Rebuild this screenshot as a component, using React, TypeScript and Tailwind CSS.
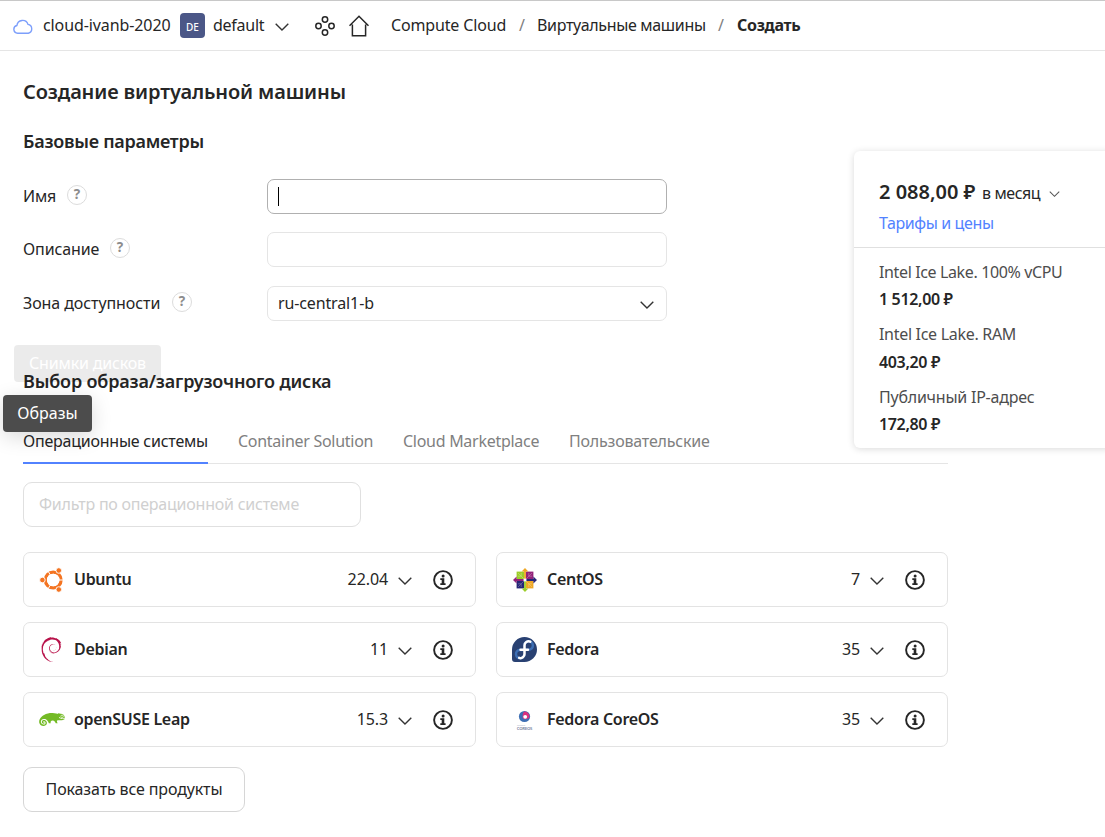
import React from "react";
import { SiDebian } from "react-icons/si";
import { FaSuse } from "react-icons/fa";

function Chevron({ className = "w-[14px] h-2 text-[#333]" }: { className?: string }) {
  return (
    <svg viewBox="0 0 14 8" fill="none" stroke="currentColor" strokeWidth="1.4" className={className}>
      <path d="M0.7 0.8 7 7 13.3 0.8" />
    </svg>
  );
}

function InfoIcon() {
  return (
    <svg viewBox="0 0 20 20" className="h-5 w-5 shrink-0">
      <circle cx="10" cy="10" r="8.9" fill="none" stroke="#262626" strokeWidth="1.9" />
      <circle cx="10.1" cy="5.9" r="1.5" fill="#262626" />
      <path d="M7.3 8.2h4v5.100h1.300v1.700H7.300v-1.700h1.400V9.900H7.300z" fill="#262626" />
    </svg>
  );
}

function UbuntuLogo() {
  return (
    <svg viewBox="0 0 26 26" className="h-[26px] w-[26px]">
      <circle cx="14.2" cy="13" r="7.9" fill="none" stroke="#f47421" strokeWidth="3.2" />
      <g stroke="#fff" strokeWidth="1">
        <path d="M14.2 13 24 13" opacity="0" />
        <path d="M14.2 13 9.300 4.500" />
        <path d="M14.2 13 9.300 21.500" />
        <path d="M14.2 13H24.200" />
      </g>
      <circle cx="14.2" cy="13" r="6.2" fill="#fff" />
      <g fill="#f47421" stroke="#fff" strokeWidth="0.9">
        <circle cx="3.4" cy="13" r="2.8" />
        <circle cx="19.8" cy="3.5" r="2.8" />
        <circle cx="19.8" cy="22.5" r="2.8" />
      </g>
    </svg>
  );
}

function CentosLogo() {
  return (
    <svg viewBox="0 0 24 24" className="h-6 w-6">
      <path d="M3.600 3.600h7.600v7.600H3.600z" fill="#9ccd2a" />
      <path d="M12.800 3.600h7.600v7.600h-7.600z" fill="#932279" />
      <path d="M3.600 12.800h7.600v7.600H3.600z" fill="#262577" />
      <path d="M12.800 12.800h7.600v7.600h-7.600z" fill="#efa724" />
      <g stroke="#fff" strokeWidth="0.5" fill="none" opacity="0.5">
        <path d="M5 5l14 14M19 5 5 19" />
        <path d="M5 8.200h3.200V5M19 8.200h-3.200V5M5 15.800h3.200V19M19 15.800h-3.200V19" />
      </g>
      <path d="M12 0l3.400 3.600h-2.500v7.500h-1.800V3.600H8.600z" fill="#efa724" />
      <path d="M24 12l-3.600 3.400v-2.500h-7.500v-1.800h7.500V8.600z" fill="#262577" />
      <path d="M12 24l-3.400-3.600h2.500v-7.500h1.800v7.500h2.500z" fill="#9ccd2a" />
      <path d="M0 12l3.600-3.400v2.500h7.500v1.800H3.600v2.500z" fill="#932279" />
      <path d="M12 10.400v3.200M10.400 12h3.200" stroke="#fff" strokeWidth="1.400" />
    </svg>
  );
}

function FedoraLogo() {
  return (
    <svg viewBox="0 0 25 25" fill="none" className="h-[25px] w-[25px]">
      <path d="M12.5 0A12.5 12.5 0 0 0 0 12.5V22a3 3 0 0 0 3 3h9.5a12.5 12.5 0 0 0 0-25z" fill="#294172" />
      <g stroke="#3c6eb4" strokeWidth="2.5">
        <path d="M13 12.700h3.500a4.200 4.200 0 1 0-4-4.200" />
        <path d="M12 12.900H7.800a4.200 4.200 0 1 0 4.600 4.100" />
      </g>
      <path
        d="M18.300 4.700a4 4 0 0 0-5.800 3.800V17a4 4 0 0 1-5.300 3.900M8.500 12.800H16"
        stroke="#fff"
        strokeWidth="2.500"
        strokeLinecap="round"
      />
    </svg>
  );
}

function CoreosLogo() {
  return (
    <svg viewBox="0 0 24 24" className="h-6 w-6">
      <circle cx="11.500" cy="8.500" r="5.600" fill="#3c6eb4" />
      <path d="M11.500 3.500a5 5 0 0 1 5 5c0 1.700-2.100 2.700-5 2.700-.9 0-1.900-1-1.900-2.700 0-2.800 1-5 1.900-5z" fill="#db2f7d" />
      <circle cx="12.200" cy="8.800" r="1.900" fill="#fff" />
      <text x="4" y="18.400" fontSize="2.500" fill="#a3aac5" fontFamily="Noto Sans, sans-serif">Fedora</text>
      <text x="3.800" y="22.200" fontSize="4.200" fontWeight="600" textLength="15.500" fill="#78829f" fontFamily="Noto Sans, sans-serif">COREOS</text>
    </svg>
  );
}

const fields = [
  { label: "Имя", width: "w-[33px] tracking-[-0.2px]", gap: "" },
  { label: "Описание", width: "w-[76px] tracking-[-0.12px]", gap: "mt-[18px]" },
  { label: "Зона доступности", width: "w-[138px] tracking-[-0.08px]", gap: "mt-[19px]" },
];

const tabs = [
  { label: "Операционные системы", style: "w-[185px] tracking-[-0.23px] text-[#262626]", active: true },
  { label: "Container Solution", style: "w-[135px] tracking-[-0.28px] text-[#808080]", active: false },
  { label: "Cloud Marketplace", style: "w-[136px] tracking-[-0.28px] text-[#808080]", active: false },
  { label: "Пользовательские", style: "w-[141px] tracking-[-0.2px] text-[#808080]", active: false },
];

const products = [
  { name: "Ubuntu", version: "22.04", logo: <UbuntuLogo /> },
  { name: "CentOS", version: "7", logo: <CentosLogo /> },
  { name: "Debian", version: "11", logo: <SiDebian className="h-[25px] w-[25px] text-[#b8124a]" /> },
  { name: "Fedora", version: "35", logo: <FedoraLogo /> },
  { name: "openSUSE Leap", version: "15.3", logo: <FaSuse className="h-[25px] w-[26px] text-[#73ba25]" /> },
  { name: "Fedora CoreOS", version: "35", logo: <CoreosLogo /> },
];

const costs = [
  { name: "Intel Ice Lake. 100% vCPU", price: "1 512,00 ₽", style: "mt-[11px]", nameStyle: "h-[27px] tracking-[-0.37px]" },
  { name: "Intel Ice Lake. RAM", price: "403,20 ₽", style: "mt-[8px]", nameStyle: "h-[28px] tracking-[-0.3px]" },
  { name: "Публичный IP-адрес", price: "172,80 ₽", style: "mt-[8px]", nameStyle: "h-[27px] tracking-[-0.23px]" },
];

function Header() {
  return (
    <header className="flex h-[51px] items-center whitespace-nowrap border-b border-t border-b-[#e5e5e5] border-t-[#c8c8c8] pl-[13px]">
      <svg viewBox="0 0 20 15" fill="none" stroke="#7d9ffb" strokeWidth="1.4" className="mt-[2px] h-[15px] w-5">
        <path d="M4.600 14.200a3.900 3.900 0 0 1-.7-7.700A5.700 5.700 0 0 1 15 5.400a4.500 4.500 0 0 1 .3 8.800z" />
      </svg>
      <span className="mb-[2px] ml-[10px] w-[137px] tracking-[-0.1px]">cloud-ivanb-2020</span>
      <span className="flex h-[25px] w-[25px] items-center justify-center rounded-[4px] bg-[#4b5787] pt-[2px] text-[10px] font-medium text-white">DE</span>
      <span className="mb-[2px] ml-2 w-[62px] tracking-[-0.25px]">default</span>
      <Chevron className="mt-[3px] h-2 w-[14px] text-[#333]" />
      <svg viewBox="0 0 20 20" fill="none" stroke="#262626" strokeWidth="1.500" className="ml-[26px] h-5 w-5">
        <circle cx="10" cy="3.500" r="2.700" />
        <circle cx="3.500" cy="10" r="2.700" />
        <circle cx="16.500" cy="10" r="2.700" />
        <circle cx="10" cy="16.500" r="2.700" />
      </svg>
      <svg viewBox="0 0 20 22" fill="none" stroke="#262626" strokeWidth="1.500" className="ml-[14px] h-[22px] w-5">
        <path d="M.5 10.700 10 1.200l9.500 9.500M3.400 9.500v11.300h13.200V9.500" />
      </svg>
      <span className="mb-[2px] ml-[22px] w-[128px] tracking-[-0.15px]">Compute Cloud</span>
      <span className="mb-[2px] w-[18px] text-[#808080]">/</span>
      <span className="mb-[2px] w-[181px] tracking-[-0.33px]">Виртуальные машины</span>
      <span className="mb-[2px] w-[19px] text-[#808080]">/</span>
      <span className="mb-[2px] font-bold tracking-[-0.3px]">Создать</span>
    </header>
  );
}

function PriceCard() {
  return (
    <aside className="relative z-10 -ml-[94px] mt-[100px] h-[297px] w-[260px] shrink-0 whitespace-nowrap rounded-[6px] bg-white shadow-[0_1px_7px_rgba(0,0,0,0.15)]">
      <div className="h-[97px] border-b border-[#e0e0e0] pl-[25px] pt-[26px]">
        <div className="flex h-[30px] items-baseline">
          <span className="w-[103px] text-[20px] font-semibold leading-[30px]">2 088,00 ₽</span>
          <span className="w-[67px] tracking-[-0.4px]">в месяц</span>
          <Chevron className="h-[6px] w-[11px] -translate-y-[2px] text-[#555]" />
        </div>
        <div className="mt-[4px] leading-6 tracking-[-0.38px] text-[#5282ff]">Тарифы и цены</div>
      </div>
      <div className="pl-[25px]">
        {costs.map((c) => (
          <div key={c.name} className={c.style}>
            <div className={`leading-[26px] text-[#4d4d4d] ${c.nameStyle}`}>{c.name}</div>
            <div className="h-[27px] font-semibold leading-[27px] tracking-[-0.35px]">{c.price}</div>
          </div>
        ))}
      </div>
    </aside>
  );
}

export default function App() {
  return (
    <div className="relative h-[837px] w-[1105px] overflow-hidden bg-white font-['Noto_Sans',sans-serif] text-[16px] leading-6 text-[#262626]">
      <Header />
      <div className="flex pl-[23px]">
        <main className="w-[925px] shrink-0 pt-[26px]">
          <h1 className="h-[30px] text-[20px] font-semibold leading-[30px] tracking-[-0.14px]">Создание виртуальной машины</h1>
          <h2 className="mt-[22px] h-6 text-[18px] font-semibold tracking-[-0.26px]">Базовые параметры</h2>
          <div className="mt-[26px]">
            {fields.map((f, i) => (
              <div key={f.label} className={`flex h-[35px] items-center ${f.gap}`}>
                <div className="flex w-[244px] items-center whitespace-nowrap">
                  <span className={`mb-[2px] ${f.width}`}>{f.label}</span>
                  <span className="mb-[3px] ml-[11px] flex h-5 w-5 items-center justify-center rounded-full border-[1.5px] border-[#dcdcdc] text-[13.5px] font-bold leading-none text-[#8c8c8c]">?</span>
                </div>
                <div
                  className={`flex h-[35px] w-[400px] items-center rounded-[7px] border pl-[10px] pr-3 ${i === 0 ? "border-[#b0b0b0]" : "border-[#e5e5e5]"}`}
                >
                  {i === 0 && <span className="h-[19px] w-px bg-black" />}
                  {i === 2 && (
                    <>
                      <span className="mb-[2px] flex-1 tracking-[-0.13px]">ru-central1-b</span>
                      <Chevron className="mt-[2px] h-2 w-[14px] text-[#333]" />
                    </>
                  )}
                </div>
              </div>
            ))}
          </div>
          <h2 className="mt-[48px] h-6 text-[18px] font-semibold tracking-[-0.17px]">Выбор образа/загрузочного диска</h2>
          <nav className="mt-[25px] flex h-[46px] gap-[30px] border-b border-[#e5e5e5]">
            {tabs.map((t) => (
              <div
                key={t.label}
                className={`h-[46px] whitespace-nowrap pt-[11px] ${t.style} ${t.active ? "border-b-2 border-[#5282ff]" : ""}`}
              >
                {t.label}
              </div>
            ))}
          </nav>
          <div className="mt-[18px] flex h-[45px] w-[338px] items-center rounded-[9px] border border-[#e0e0e0] pb-[2px] pl-[15px] tracking-[-0.23px] text-[#d0d0d0]">
            Фильтр по операционной системе
          </div>
          <div className="mt-[25px] grid grid-cols-[453px_452px] gap-x-5 gap-y-[15px]">
            {products.map((p) => (
              <div key={p.name} className="flex h-[55px] items-center rounded-[7px] border border-[#e3e3e3] pl-[14px] pr-[22px]">
                <span className="flex w-[27px] shrink-0 items-center justify-center">{p.logo}</span>
                <span className="mb-[2px] ml-[9px] flex-1 font-semibold tracking-[-0.3px]">{p.name}</span>
                <span className="mb-[2px] tracking-[-0.1px]">{p.version}</span>
                <Chevron className="ml-[10px] mr-[21px] mt-[3px] h-2 w-[14px] shrink-0 text-[#333]" />
                <InfoIcon />
              </div>
            ))}
          </div>
          <button className="mt-5 flex h-[45px] w-[222px] items-center justify-center whitespace-nowrap rounded-[9px] border border-[#d6d6d6] pb-[2px] tracking-[-0.13px]">
            Показать все продукты
          </button>
        </main>
        <PriceCard />
      </div>
      <div className="absolute left-[14px] top-[345px] flex h-[37px] w-[147px] items-center justify-center whitespace-nowrap rounded-[4px] bg-black/8 pb-[2px] tracking-[-0.17px] text-white">
        Снимки дисков
      </div>
      <div className="absolute left-[3px] top-[395px] flex h-[37px] w-[89px] items-center justify-center rounded-[4px] bg-[#4c4c4c] pb-[2px] text-white shadow-[0_5px_20px_rgba(0,0,0,0.15)]">
        Образы
      </div>
    </div>
  );
}
